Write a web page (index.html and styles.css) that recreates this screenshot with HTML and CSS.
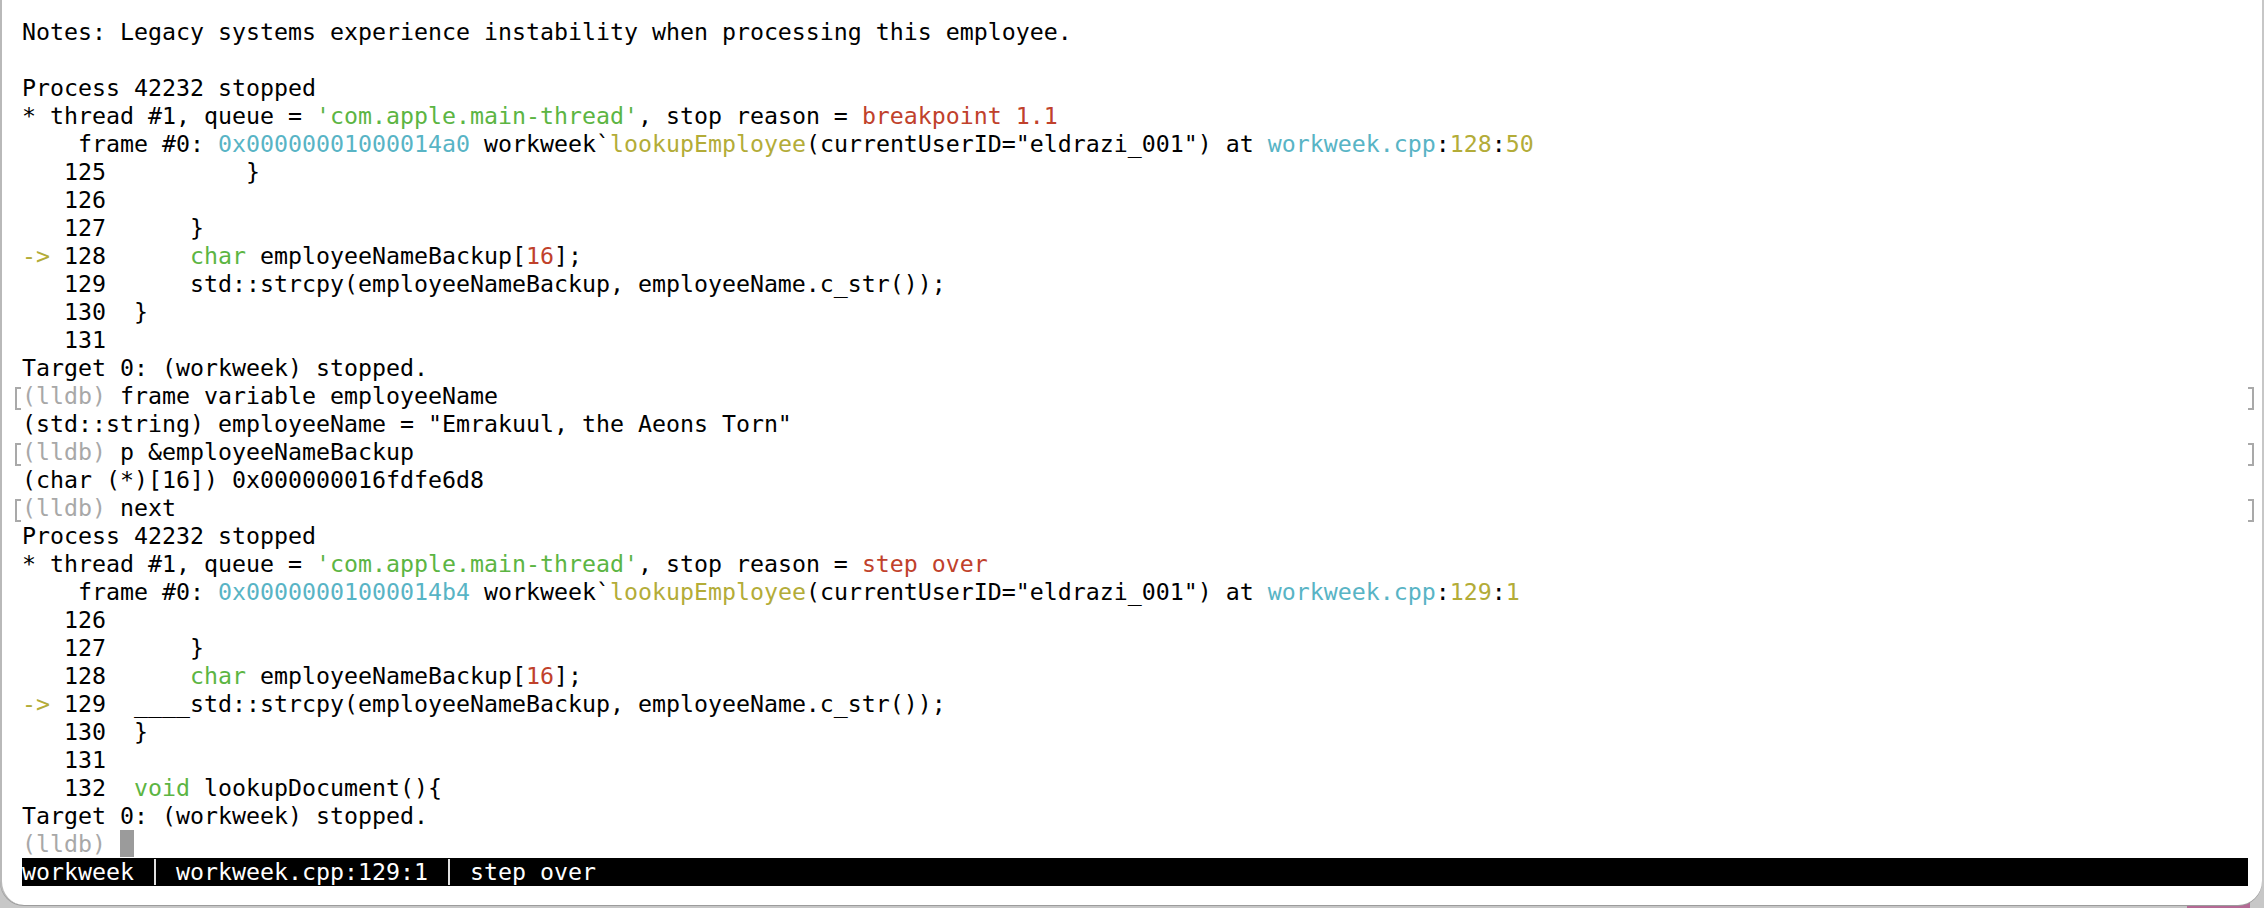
FILE: index.html
```html
<!DOCTYPE html>
<html lang="en">
<head>
<meta charset="utf-8">
<title>lldb — workweek</title>
<link rel="stylesheet" href="styles.css">
</head>
<body>
<div class="window">
<div class="term">
<div class="ln">Notes: Legacy systems experience instability when processing this employee.</div>
<div class="ln"></div>
<div class="ln">Process 42232 stopped</div>
<div class="ln">* thread #1, queue = <span class="g">'com.apple.main-thread'</span>, stop reason = <span class="r">breakpoint 1.1</span></div>
<div class="ln">    frame #0: <span class="c">0x00000001000014a0</span> workweek`<span class="o">lookupEmployee</span>(currentUserID="eldrazi_001") at <span class="c">workweek.cpp</span>:<span class="o">128</span>:<span class="o">50</span></div>
<div class="ln">   125          }</div>
<div class="ln">   126</div>
<div class="ln">   127      }</div>
<div class="ln"><span class="o">-&gt;</span> 128      <span class="g">char</span> employeeNameBackup[<span class="r">16</span>];</div>
<div class="ln">   129      std::strcpy(employeeNameBackup, employeeName.c_str());</div>
<div class="ln">   130  }</div>
<div class="ln">   131</div>
<div class="ln">Target 0: (workweek) stopped.</div>
<div class="ln mark"><span class="p">(lldb)</span> frame variable employeeName</div>
<div class="ln">(std::string) employeeName = "Emrakuul, the Aeons Torn"</div>
<div class="ln mark"><span class="p">(lldb)</span> p &amp;employeeNameBackup</div>
<div class="ln">(char (*)[16]) 0x000000016fdfe6d8</div>
<div class="ln mark"><span class="p">(lldb)</span> next</div>
<div class="ln">Process 42232 stopped</div>
<div class="ln">* thread #1, queue = <span class="g">'com.apple.main-thread'</span>, stop reason = <span class="r">step over</span></div>
<div class="ln">    frame #0: <span class="c">0x00000001000014b4</span> workweek`<span class="o">lookupEmployee</span>(currentUserID="eldrazi_001") at <span class="c">workweek.cpp</span>:<span class="o">129</span>:<span class="o">1</span></div>
<div class="ln">   126</div>
<div class="ln">   127      }</div>
<div class="ln">   128      <span class="g">char</span> employeeNameBackup[<span class="r">16</span>];</div>
<div class="ln"><span class="o">-&gt;</span> 129  ____std::strcpy(employeeNameBackup, employeeName.c_str());</div>
<div class="ln">   130  }</div>
<div class="ln">   131</div>
<div class="ln">   132  <span class="g">void</span> lookupDocument(){</div>
<div class="ln">Target 0: (workweek) stopped.</div>
<div class="ln"><span class="p">(lldb)</span> <span class="cursor"></span></div>
<div class="status">workweek <span class="sep"></span> workweek.cpp:129:1 <span class="sep"></span> step over</div>
</div>
</div>
</body>
</html>
```

FILE: styles.css
```css
html, body {
  margin: 0;
  padding: 0;
}

body {
  width: 2264px;
  height: 908px;
  overflow: hidden;
  background: linear-gradient(90deg, #c7c7c7 0 96.6%, #b46a95 96.6% 99.4%, #c7c7c7 99.4%);
}

.window {
  box-sizing: border-box;
  width: 2262px;
  height: 905px;
  background: #ffffff;
  border-left: 2px solid #b9b9b9;
  border-radius: 0 0 24px 24px;
  box-shadow: 0 1px 0 #9c9c9c;
}

.term {
  padding: 18px 8px 0 20px;
  font-family: "DejaVu Sans Mono", "Liberation Mono", monospace;
  font-size: 23.254px;
  line-height: 28px;
  color: #000000;
}

.ln {
  position: relative;
  height: 28px;
  white-space: pre;
}

.g { color: #5cb543; }
.c { color: #58b4c5; }
.o { color: #b3ac38; }
.r { color: #c0412b; }
.p { color: #a8a8a8; }

.mark::before,
.mark::after {
  content: "";
  position: absolute;
  top: 5px;
  width: 4px;
  height: 19px;
  border: 2px solid #a9a9a9;
}

.mark::before {
  left: -7px;
  border-right: none;
}

.mark::after {
  right: 0;
  border-left: none;
}

.cursor {
  display: inline-block;
  width: 1ch;
  height: 27px;
  vertical-align: top;
  background: #9b9b9b;
}

.status {
  height: 28px;
  margin-right: 6px;
  background: #000000;
  color: #ffffff;
  white-space: pre;
}

.sep {
  display: inline-block;
  width: 1ch;
  height: 26px;
  margin-top: 1px;
  vertical-align: top;
  background: linear-gradient(90deg, transparent calc(50% - 1px), #e0e0e0 calc(50% - 1px), #e0e0e0 calc(50% + 1px), transparent calc(50% + 1px));
}
```
